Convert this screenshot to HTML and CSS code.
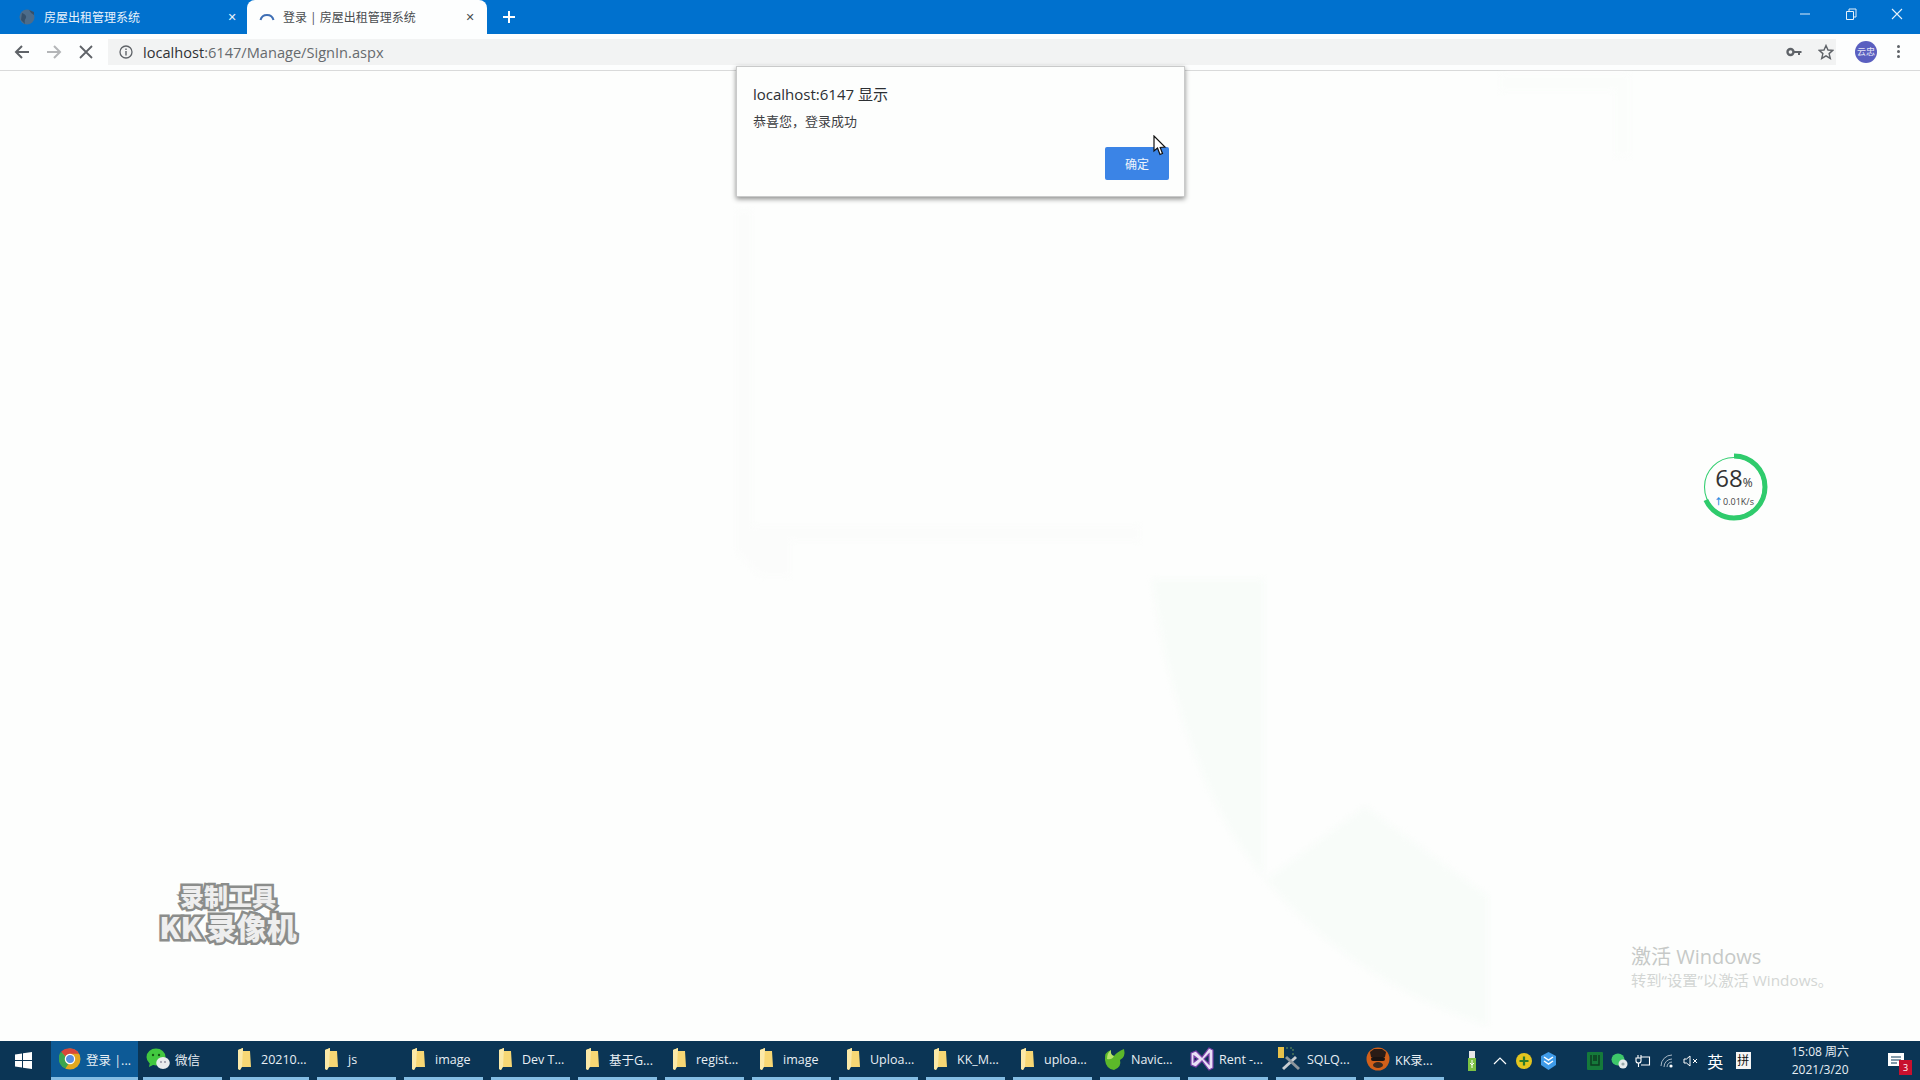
FILE: index.html
```html
<!DOCTYPE html>
<html lang="zh-CN">
<head>
  <meta charset="UTF-8">
  <title>登录 | 房屋出租管理系统</title>
  <link rel="stylesheet" href="styles.css">
</head>
<body>
  <svg class="defs" width="0" height="0">
    <symbol id="folder" viewBox="0 0 14 22">
      <path d="M1 2 L6 0 L6 3 L13 3 L14 19 L4 19 L3 22 L1 21 Z" fill="#f7d774"/>
      <path d="M1 2 L6 0 L5 19 L3 22 L1 21 Z" fill="#fbe9a8"/>
    </symbol>
  </svg>

  <div class="tabstrip">
    <div class="tab">
      <svg class="favicon" width="16" height="16" viewBox="0 0 16 16"><circle cx="8" cy="8" r="7.5" fill="#4d6c8a"/><path d="M3 4 Q8 6 7 9 Q5 11 6 15 L2 11 Z M10 1 Q12 5 15 6 L15 3 Z" fill="#35506b"/></svg>
      <span class="tab-title">房屋出租管理系统</span>
      <span class="tab-close">✕</span>
    </div>
    <div class="tab tab-active">
      <svg class="favicon" width="16" height="16" viewBox="0 0 16 16"><path d="M1.5 11 A6.7 6.7 0 0 1 14.5 11" fill="none" stroke="#3f6fb5" stroke-width="2"/></svg>
      <span class="tab-title">登录 | 房屋出租管理系统</span>
      <span class="tab-close">✕</span>
    </div>
    <svg class="newtab" width="14" height="14" viewBox="0 0 14 14"><path d="M7 1 V13 M1 7 H13" stroke="#fff" stroke-width="2"/></svg>
    <div class="winctl">
      <svg width="14" height="14" viewBox="0 0 14 14"><path d="M2 7 H12" stroke="#dcecf8" stroke-width="1"/></svg>
      <svg width="14" height="14" viewBox="0 0 14 14"><path d="M2.5 4.5 H9.5 V12.5 H2.5 Z M5 4.5 V2 H12 V10 H9.5" fill="none" stroke="#e6f1fa" stroke-width="1"/></svg>
      <svg width="14" height="14" viewBox="0 0 14 14"><path d="M2 2 L12 12 M12 2 L2 12" stroke="#e6f1fa" stroke-width="1.1"/></svg>
    </div>
  </div>

  <div class="toolbar">
    <svg class="navbtn" width="16" height="16" viewBox="0 0 16 16"><path d="M15 8 H2 M8 2 L2 8 L8 14" fill="none" stroke="#5f6368" stroke-width="2"/></svg>
    <svg class="navbtn" width="16" height="16" viewBox="0 0 16 16"><path d="M1 8 H14 M8 2 L14 8 L8 14" fill="none" stroke="#b4b6b8" stroke-width="2"/></svg>
    <svg class="navbtn" width="16" height="16" viewBox="0 0 16 16"><path d="M2 2 L14 14 M14 2 L2 14" stroke="#5f6368" stroke-width="1.8"/></svg>
    <div class="omnibox">
      <svg class="info" width="14" height="14" viewBox="0 0 14 14"><circle cx="7" cy="7" r="6" fill="none" stroke="#5f6368" stroke-width="1.3"/><path d="M7 6 V10.5 M7 3.4 V5" stroke="#5f6368" stroke-width="1.4"/></svg>
      <span class="url">localhost<span class="url-dim">:6147/Manage/SignIn.aspx</span></span>
      <svg class="key" width="16" height="10" viewBox="0 0 16 10"><circle cx="4.5" cy="5" r="3" fill="none" stroke="#5f6368" stroke-width="2.4"/><path d="M7 4 H15.5 V6 H14 V8 H12 V6 H7 Z" fill="#5f6368"/></svg>
      <svg class="star" width="16" height="16" viewBox="0 0 16 16"><path d="M8 1.5 L10 6 L14.8 6.4 L11.1 9.6 L12.3 14.4 L8 11.8 L3.7 14.4 L4.9 9.6 L1.2 6.4 L6 6 Z" fill="none" stroke="#5f6368" stroke-width="1.4"/></svg>
    </div>
    <div class="avatar">云忠</div>
    <div class="menu"><i></i><i></i><i></i></div>
  </div>

  <main class="page">
    <svg class="ghost" width="1920" height="970" viewBox="0 0 1920 970">
      <path d="M1152 508 H1264 V810 L1365 735 L1488 825 V955 Q1320 900 1230 760 Q1170 650 1152 508 Z" fill="#f8fcf9"/>
      <path d="M736 140 H752 V455 H1140 V470 H790 V505 H760 L736 480 Z" fill="#fbfcfb"/>
      <path d="M1500 4 H1630 V85 H1615 V20 H1500 Z" fill="#fbfdfb"/>
    </svg>

    <div class="dialog">
      <div class="dialog-title">localhost:6147 显示</div>
      <div class="dialog-msg">恭喜您，登录成功</div>
      <div class="dialog-foot"><button class="dialog-ok">确定</button></div>
    </div>

    <svg class="cursor" width="14" height="21" viewBox="0 0 14 21"><path d="M1 1 V16 L4.5 13 L7 19.5 L9.5 18.5 L7.2 12.5 L12 12 Z" fill="#fff" stroke="#111" stroke-width="1.2"/></svg>

    <div class="speed">
      <svg class="speed-ring" width="68" height="68" viewBox="0 0 68 68">
        <circle cx="34" cy="34" r="29.5" fill="#fdfefd" stroke="#35cf72" stroke-width="1.1"/>
        <circle cx="34" cy="34" r="31" fill="none" stroke="#2fcb6c" stroke-width="5" stroke-dasharray="132.4 62.4" transform="rotate(-90 34 34)"/>
      </svg>
      <div class="speed-num">68<small>%</small></div>
      <div class="speed-rate"><b>↑</b>0.01K/s</div>
    </div>

    <div class="kk-mark">
      <div class="kk-line1">录制工具</div>
      <div class="kk-line2">KK 录像机</div>
    </div>

    <div class="activate">
      <div class="activate-big">激活 Windows</div>
      <div class="activate-small">转到“设置”以激活 Windows。</div>
    </div>
  </main>

  <footer class="taskbar">
    <div class="start">
      <svg width="17" height="17" viewBox="0 0 17 17"><path d="M0 2.4 L7 1.4 V8 H0 Z M8 1.2 L17 0 V8 H8 Z M0 9 H7 V15.6 L0 14.6 Z M8 9 H17 V17 L8 15.8 Z" fill="#fff"/></svg>
    </div>
    <div class="task task-active">
      <svg class="task-icon-lg" width="22" height="22" viewBox="0 0 22 22"><circle cx="11" cy="11" r="10.5" fill="#e3a81f"/><path d="M11 .5 A10.5 10.5 0 0 1 20.1 5.8 H11 A5.2 5.2 0 0 0 6.5 8.4 L2 3.8 A10.5 10.5 0 0 1 11 .5 Z" fill="#d9473a"/><path d="M2 3.8 L6.5 8.4 A5.2 5.2 0 0 0 9.5 16 L6.4 20.4 A10.5 10.5 0 0 1 2 3.8 Z" fill="#3da54f"/><circle cx="11" cy="11" r="4.6" fill="#5a8fe0" stroke="#fff" stroke-width="1.2"/></svg>
      <span>登录 |...</span>
    </div>
    <div class="task task-wechat">
      <svg class="task-icon-lg" width="24" height="22" viewBox="0 0 24 22"><ellipse cx="10" cy="9" rx="9.5" ry="8.5" fill="#42c83f"/><path d="M4 14 L3 19 L9 16 Z" fill="#42c83f"/><circle cx="7" cy="7" r="1.2" fill="#155a13"/><circle cx="13" cy="7" r="1.2" fill="#155a13"/><ellipse cx="17" cy="15" rx="6.8" ry="6" fill="#e8ecec"/><circle cx="15" cy="14" r=".9" fill="#889"/><circle cx="19" cy="14" r=".9" fill="#889"/></svg>
      <span>微信</span>
    </div>
    <div class="task"><svg class="folder" width="14" height="22"><use href="#folder"/></svg><span>20210...</span></div>
    <div class="task"><svg class="folder" width="14" height="22"><use href="#folder"/></svg><span>js</span></div>
    <div class="task"><svg class="folder" width="14" height="22"><use href="#folder"/></svg><span>image</span></div>
    <div class="task"><svg class="folder" width="14" height="22"><use href="#folder"/></svg><span>Dev T...</span></div>
    <div class="task"><svg class="folder" width="14" height="22"><use href="#folder"/></svg><span>基于G...</span></div>
    <div class="task"><svg class="folder" width="14" height="22"><use href="#folder"/></svg><span>regist...</span></div>
    <div class="task"><svg class="folder" width="14" height="22"><use href="#folder"/></svg><span>image</span></div>
    <div class="task"><svg class="folder" width="14" height="22"><use href="#folder"/></svg><span>Uploa...</span></div>
    <div class="task"><svg class="folder" width="14" height="22"><use href="#folder"/></svg><span>KK_M...</span></div>
    <div class="task"><svg class="folder" width="14" height="22"><use href="#folder"/></svg><span>uploa...</span></div>
    <div class="task task-app">
      <svg class="task-icon-lg" width="24" height="24" viewBox="0 0 24 24"><path d="M3 13 Q2 5 9 3 Q8 8 12 9 Q15 5 22 2 Q24 10 18 13 Q20 20 12 23 Q4 22 3 13 Z" fill="#5cb82a"/><path d="M9 3 Q8 8 12 9 Q10 13 5 12 Q5 6 9 3 Z" fill="#b4e36a"/></svg>
      <span>Navic...</span>
    </div>
    <div class="task task-app">
      <svg class="task-icon-lg" width="24" height="26" viewBox="0 0 24 26"><path d="M1 7 L6 5 L12 11 L19 2 L23 4 V22 L19 24 L12 15 L6 21 L1 19 Z M4 10 V16 L8 13 Z M19 8 L14 13 L19 18 Z" fill="#e8e0f5" fill-rule="evenodd" stroke="#7a3fa8" stroke-width="1.2"/></svg>
      <span>Rent -...</span>
    </div>
    <div class="task task-app">
      <svg class="task-icon-lg" width="24" height="26" viewBox="0 0 24 26"><rect x="0" y="1" width="6" height="11" fill="#e8c14a"/><path d="M8 2 H15 V10" fill="none" stroke="#6d9a5a" stroke-dasharray="2 2"/><path d="M4 22 L17 10 L19 12 L6 24 Z" fill="#c9ced2"/><path d="M7 12 L20 24 L22 22 L9 10 Z" fill="#8d969c"/></svg>
      <span>SQLQ...</span>
    </div>
    <div class="task task-app">
      <svg class="task-icon-lg" width="24" height="24" viewBox="0 0 24 24"><circle cx="12" cy="12" r="11.5" fill="#d2601a"/><path d="M4 5 L8 2 H16 L20 5 L19 10 H5 Z" fill="#2a1c16"/><rect x="5" y="10" width="14" height="4" rx="2" fill="#1a1412"/><ellipse cx="12" cy="18" rx="5" ry="3" fill="#3a2a20"/></svg>
      <span>KK录...</span>
    </div>

    <div class="tray">
      <div class="tray-cell tray-usb"><svg width="10" height="20" viewBox="0 0 10 20"><rect x="1" y="7" width="8" height="13" fill="#7cc243"/><rect x="2" y="0" width="6" height="7" fill="#e8e8e8"/><path d="M5 9 V17 M3 12 L5 14 L7 12" stroke="#fff" fill="none"/></svg></div>
      <div class="tray-cell"><svg width="14" height="8" viewBox="0 0 14 8"><path d="M1 7 L7 1 L13 7" fill="none" stroke="#fff" stroke-width="1.2"/></svg></div>
      <div class="tray-cell"><svg width="16" height="16" viewBox="0 0 16 16"><circle cx="8" cy="8" r="8" fill="#e3c51f"/><path d="M8 3.5 V12.5 M3.5 8 H12.5" stroke="#2b7a2b" stroke-width="2.2"/></svg></div>
      <div class="tray-cell"><svg width="15" height="18" viewBox="0 0 15 18"><path d="M7.5 0 L15 4 V13 L7.5 18 L0 13 V4 Z" fill="#3f9be8"/><path d="M3 5 L7.5 8 L12 5 M3 9 L7.5 12 L12 9" fill="none" stroke="#fff" stroke-width="1.5"/></svg></div>
      <div class="tray-gap"></div>
      <div class="tray-cell"><svg width="16" height="18" viewBox="0 0 16 18"><rect width="16" height="18" rx="1" fill="#157a3a"/><path d="M4 3 V13 H12 V3 M7 3 V9 M9 3 V9" fill="none" stroke="#0d3d22" stroke-width="1.5"/></svg></div>
      <div class="tray-cell"><svg width="17" height="16" viewBox="0 0 17 16"><ellipse cx="7" cy="6.5" rx="6.5" ry="6" fill="#3ec76a"/><circle cx="12" cy="11" r="4.5" fill="#e6eaea"/><circle cx="12" cy="11" r="1.6" fill="#9aa"/></svg></div>
      <div class="tray-cell"><svg width="16" height="14" viewBox="0 0 16 14"><path d="M6 3 H14.5 V11 H6 M6 1 V4 M3 1 V4 M1 4 H6 V7 Q6 9 3.5 9 Q1 9 1 7 Z M3.5 9 V13" fill="none" stroke="#fff" stroke-width="1.1"/></svg></div>
      <div class="tray-cell"><svg width="14" height="14" viewBox="0 0 14 14"><path d="M1 12 A11 11 0 0 1 12 1 M4 13 A8 8 0 0 1 12 5 M7 13 A5 5 0 0 1 12 8" fill="none" stroke="#a9b9c6" stroke-width="1"/><circle cx="11" cy="12" r="1.6" fill="#fff"/></svg></div>
      <div class="tray-cell"><svg width="16" height="12" viewBox="0 0 16 12"><path d="M1 4 H3.5 L7 1 V11 L3.5 8 H1 Z" fill="none" stroke="#fff" stroke-width="1"/><path d="M10 4 L14 8 M14 4 L10 8" stroke="#fff" stroke-width="1"/></svg></div>
      <div class="tray-cell tray-ime">英</div>
      <div class="tray-cell"><span class="tray-pin">拼</span></div>
      <div class="clock"><div>15:08 周六</div><div>2021/3/20</div></div>
      <div class="notify">
        <svg width="16" height="18" viewBox="0 0 16 18"><path d="M0 1 H16 V14 H0 Z" fill="#fff"/><path d="M3 5 H13 M3 8 H13 M3 11 H9" stroke="#0b3a5b" stroke-width="1.2"/></svg>
        <span class="notify-badge">3</span>
      </div>
    </div>
  </footer>
</body>
</html>
```

FILE: styles.css
```css
* {
  box-sizing: border-box;
}

body {
  margin: 0;
  width: 1920px;
  height: 1080px;
  overflow: hidden;
  display: flex;
  flex-direction: column;
  font-family: "Open Sans", "Noto Sans CJK SC", sans-serif;
  background: #fdfefd;
  color: #333;
}

.defs {
  position: absolute;
}

/* browser top */
.tabstrip {
  height: 34px;
  flex: none;
  display: flex;
  align-items: stretch;
  background: #0071ce;
}

.tab {
  width: 245px;
  margin-right: 2px;
  padding: 0 5px 0 19px;
  display: flex;
  align-items: center;
  color: #e8f2fb;
  font-size: 12px;
}

.tab-active {
  width: 240px;
  padding: 0 9px 0 12px;
  background: #fdfefe;
  border-radius: 8px 8px 0 0;
  color: #4a4d50;
}

.favicon {
  flex: none;
  margin-right: 9px;
}

.tab-active .favicon {
  margin-right: 8px;
}

.tab-title {
  flex: 1;
  white-space: nowrap;
}

.tab-close {
  width: 16px;
  text-align: center;
  font-size: 11px;
  font-family: "DejaVu Sans", sans-serif;
}

.newtab {
  align-self: center;
  margin-left: 13px;
}

.winctl {
  margin-left: auto;
  padding-right: 16px;
  display: flex;
  align-items: center;
  gap: 32px;
  height: 28px;
}

.toolbar {
  height: 37px;
  flex: none;
  display: flex;
  align-items: center;
  padding: 0 0 1px 14px;
  background: #fdfefe;
  border-bottom: 1px solid #d9dada;
}

.navbtn {
  margin-right: 16px;
  flex: none;
}

.omnibox {
  width: 1728px;
  height: 26px;
  margin-left: -2px;
  padding: 0 3px 0 11px;
  display: flex;
  align-items: center;
  background: #f2f3f3;
  font-size: 14.6px;
  color: #303235;
}

.info {
  margin-right: 10px;
}

.url-dim {
  color: #666a6e;
}

.key {
  margin-left: auto;
  margin-right: 16px;
}

.star {
  margin-right: -1px;
}

.avatar {
  width: 22px;
  height: 22px;
  margin-left: 19px;
  border-radius: 50%;
  background: #5a5fc0;
  color: #e5e6f6;
  font-size: 9px;
  line-height: 22px;
  text-align: center;
  flex: none;
}

.menu {
  margin-left: 20px;
  display: flex;
  flex-direction: column;
  gap: 2px;
}

.menu i {
  width: 3px;
  height: 3px;
  border-radius: 50%;
  background: #5f6368;
}

/* page area */
.page {
  flex: 1;
  position: relative;
}

.ghost {
  position: absolute;
  left: 0;
  top: 0;
  filter: blur(3px);
}

.dialog {
  position: absolute;
  left: 736px;
  top: -5px;
  width: 449px;
  height: 131px;
  padding: 17px 15px 0 16px;
  background: #fdfefd;
  border: 1px solid #c9caca;
  box-shadow: 0 2px 5px rgba(0, 0, 0, 0.45);
}

.dialog-title {
  font-size: 15px;
  line-height: 20px;
  color: #2c2f33;
}

.dialog-msg {
  margin-top: 7px;
  font-size: 13px;
  line-height: 20px;
  color: #3d4043;
}

.dialog-foot {
  display: flex;
  justify-content: flex-end;
  margin-top: 16px;
}

.dialog-ok {
  width: 64px;
  height: 33px;
  border: none;
  border-radius: 2px;
  background: #3b84e6;
  color: #eef5fd;
  font-family: inherit;
  font-size: 12px;
}

.cursor {
  position: absolute;
  left: 1153px;
  top: 64px;
}

.speed {
  position: absolute;
  left: 1700px;
  top: 382px;
  width: 68px;
  height: 68px;
  text-align: center;
}

.speed-ring {
  position: absolute;
  left: 0;
  top: 0;
}

.speed-num {
  position: relative;
  padding-top: 12px;
  font-size: 24px;
  line-height: 26px;
  color: #333;
  font-family: "Open Sans", sans-serif;
}

.speed-num small {
  font-size: 12px;
}

.speed-rate {
  position: relative;
  font-size: 9px;
  line-height: 12px;
  color: #444;
}

.speed-rate b {
  color: #2f8be0;
}

.kk-mark {
  position: absolute;
  left: 140px;
  top: 809px;
  width: 176px;
  text-align: center;
  font-family: "Noto Sans CJK SC", sans-serif;
  font-weight: 900;
  color: #eeeeee;
  -webkit-text-stroke: 5px #8b8d8b;
  paint-order: stroke fill;
}

.kk-line1 {
  font-size: 24px;
  line-height: 31px;
}

.kk-line2 {
  font-size: 30px;
  line-height: 31px;
  word-spacing: -2px;
}

.activate {
  position: absolute;
  left: 1631px;
  top: 872px;
  white-space: nowrap;
}

.activate-big {
  font-size: 20px;
  line-height: 28px;
  color: #c6c9c7;
}

.activate-small {
  font-size: 15.3px;
  line-height: 19px;
  color: #d3d6d4;
}

/* windows taskbar */
.taskbar {
  height: 39px;
  flex: none;
  display: flex;
  align-items: stretch;
  background: #0b3555;
  color: #e8eff4;
  font-size: 12.5px;
}

.start {
  width: 51px;
  display: flex;
  align-items: center;
  justify-content: center;
  padding-right: 4px;
}

.task {
  width: 79px;
  margin-right: 8px;
  padding-left: 7px;
  display: flex;
  align-items: center;
  white-space: nowrap;
  border-bottom: 3px solid #84bde3;
}

.task-active {
  width: 87px;
  margin-right: 5px;
  padding-left: 8px;
  background: #0d5a96;
}

.task-wechat {
  padding-left: 3px;
}

.task-app {
  width: 80px;
  padding-left: 2px;
}

.task-icon-lg {
  flex: none;
  margin-right: 5px;
}

.folder {
  flex: none;
  margin-right: 10px;
}

.tray {
  margin-left: auto;
  width: 460px;
  padding-right: 8px;
  display: flex;
  align-items: center;
}

.tray-cell {
  width: 24px;
  flex: none;
  display: flex;
  align-items: center;
  justify-content: center;
}

.tray-usb {
  margin-right: 4px;
}

.tray-gap {
  width: 24px;
}

.tray-ime {
  font-size: 16px;
  color: #fff;
}

.tray-pin {
  margin-left: 8px;
  width: 15px;
  height: 17px;
  background: #f5f5f5;
  color: #111;
  font-size: 12px;
  line-height: 17px;
  text-align: center;
}

.clock {
  width: 96px;
  margin-left: 22px;
  font-size: 12px;
  line-height: 18px;
  text-align: center;
}

.notify {
  position: relative;
  margin-left: 14px;
  width: 32px;
  display: flex;
  justify-content: center;
}

.notify-badge {
  position: absolute;
  right: 0;
  bottom: -5px;
  width: 13px;
  height: 15px;
  background: #c8102e;
  color: #fff;
  font-size: 9px;
  line-height: 15px;
  text-align: center;
}
```
